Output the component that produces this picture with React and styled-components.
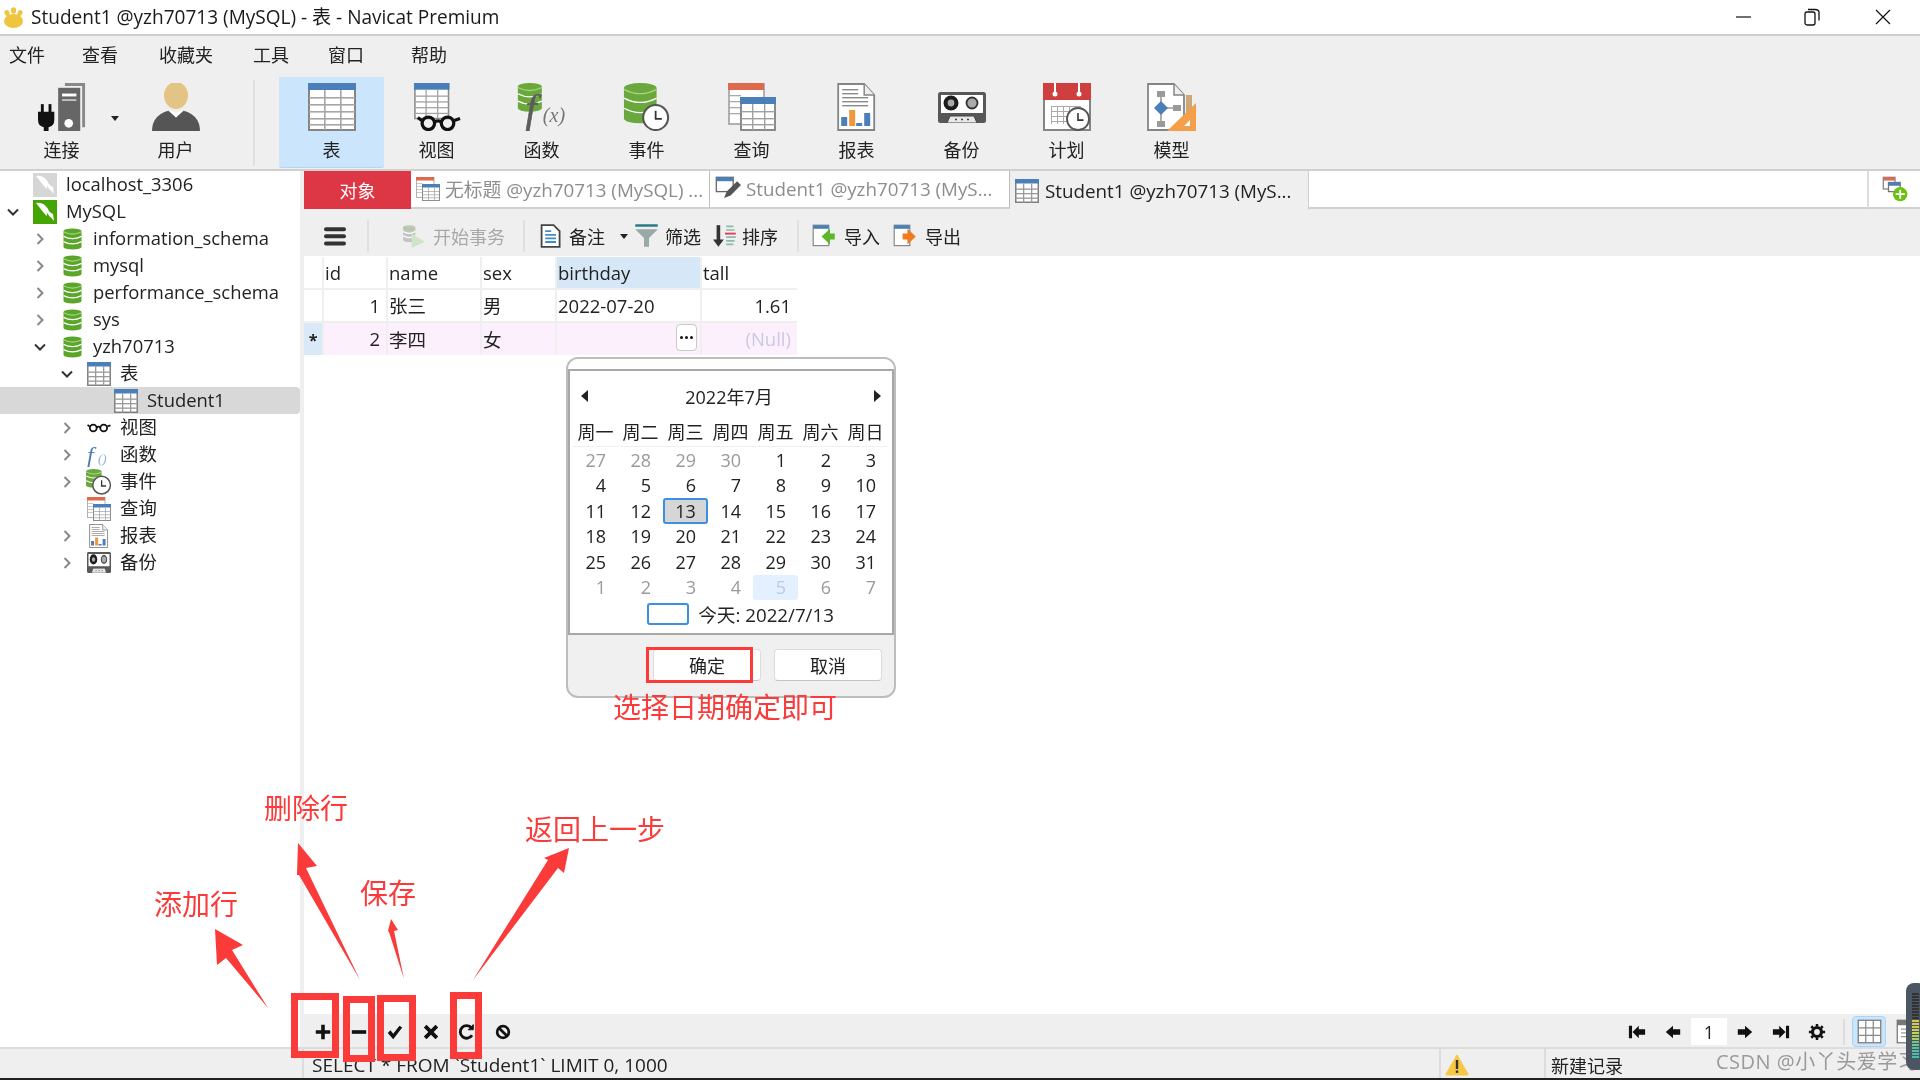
import React from 'react';
import styled, { createGlobalStyle } from 'styled-components';

const FONT = '"Open Sans", "Noto Sans CJK SC", sans-serif';

const Global = createGlobalStyle`
  html, body { margin: 0; padding: 0; background: #fff; overflow: hidden; }
  * { box-sizing: border-box; }
`;

const Page = styled.div`
  position: relative;
  width: 1920px;
  height: 1080px;
  display: flex;
  flex-direction: column;
  font-family: ${FONT};
  font-size: 18px;
  color: #222;
  background: #fff;
  overflow: hidden;
  filter: blur(0.35px);
`;

/* ---------- window chrome ---------- */
const TitleBar = styled.div`
  height: 36px;
  flex: none;
  display: flex;
  align-items: center;
  padding-left: 3px;
  border-bottom: 2px solid #cfcfcf;
  background: #fff;
`;
const TitleText = styled.div`
  margin-left: 7px;
  flex: 1;
  font-size: 19.05px;
  line-height: 30px;
  color: #1a1a1a;
  white-space: nowrap;
`;
const WinBtn = styled.div`
  width: ${p => p.$w}px;
  height: 34px;
  display: flex;
  align-items: center;
  justify-content: center;
`;
const MenuBar = styled.div`
  height: 36px;
  flex: none;
  background: #efefef;
  display: flex;
  align-items: center;
  padding: 2px 0 0 9px;
`;
const MenuItem = styled.div`
  margin-right: ${p => p.$gap}px;
  white-space: nowrap;
  line-height: 1;
`;
const ToolBar = styled.div`
  height: 99px;
  flex: none;
  background: #efefef;
  border-bottom: 2px solid #d0d0d0;
  display: flex;
  align-items: flex-start;
  padding: 5px 0 0 9px;
`;
const ToolBtn = styled.div`
  position: relative;
  width: 105px;
  height: 91px;
  flex: none;
  margin-left: ${p => p.$ml || 0}px;
  display: flex;
  flex-direction: column;
  align-items: center;
  padding-top: 6px;
  background: ${p => (p.$active ? '#cbe5fc' : 'transparent')};
  border-radius: 0 0 3px 3px;
  border-bottom: 1px solid ${p => (p.$active ? '#b4d6f4' : 'transparent')};
`;
const ToolIcon = styled.div`
  height: 48px;
  display: flex;
  align-items: center;
`;
const ToolLabel = styled.div`
  margin-top: 7px;
  line-height: 24px;
  color: #222;
`;
const ToolCaret = styled.div`
  position: absolute;
  right: -5px;
  top: 39px;
  width: 0;
  height: 0;
  border: 4px solid transparent;
  border-top: 5px solid #222;
`;
const ToolSep = styled.div`
  width: 2px;
  height: 86px;
  flex: none;
  margin: 3px 0 0 25px;
  background: #e0e0e0;
`;

/* ---------- main area ---------- */
const Main = styled.div`
  height: 876px;
  flex: none;
  display: flex;
`;
const Sidebar = styled.div`
  width: 304px;
  flex: none;
  border-right: 4px solid #efefef;
  background: #fff;
`;
const TreeRow = styled.div`
  height: 27px;
  display: flex;
  align-items: center;
  padding-left: ${p => p.$level * 27}px;
  background: ${p => (p.$selected ? '#d8d8d8' : 'transparent')};
  border-radius: 0 4px 4px 0;
`;
const TreeArrow = styled.div`
  width: 27px;
  flex: none;
  display: flex;
  justify-content: center;
  padding-right: 1px;
`;
const TreeIcon = styled.div`
  width: 36px;
  height: 27px;
  flex: none;
  display: flex;
  align-items: center;
  justify-content: center;
`;
const TreeLabel = styled.div`
  margin-left: 3px;
  padding-bottom: 2px;
  font-size: 18.4px;
  line-height: 25px;
  white-space: nowrap;
  color: #222;
`;
const Content = styled.div`
  flex: 1;
  min-width: 0;
  display: flex;
  flex-direction: column;
`;
const TabStrip = styled.div`
  height: 39px;
  flex: none;
  display: flex;
  background: #efefef;
`;
const ObjectTab = styled.div`
  width: 107px;
  height: 38px;
  flex: none;
  background: #dd3745;
  color: #fff;
  display: flex;
  align-items: center;
  justify-content: center;
`;
const Tab = styled.div`
  width: ${p => p.$w}px;
  height: ${p => (p.$active ? 39 : 38)}px;
  flex: none;
  display: flex;
  align-items: center;
  padding-left: 5px;
  gap: ${p => (p.$active ? 6 : 5)}px;
  font-size: 18.8px;
  background: ${p => (p.$active ? '#efefef' : '#fff')};
  border-right: 1px solid ${p => (p.$active ? '#cfcfcf' : '#bdbdbd')};
  border-bottom: ${p => (p.$active ? 0 : 2)}px solid #d0d0d0;
  color: ${p => (p.$active ? '#222' : '#8d8d8d')};
  white-space: nowrap;
  overflow: hidden;
`;
const TabFill = styled.div`
  flex: 1;
  height: 38px;
  background: #fff;
  border-bottom: 2px solid #d0d0d0;
`;
const TabAdd = styled.div`
  width: 53px;
  height: 38px;
  flex: none;
  background: #fff;
  border-left: 2px solid #dcdcdc;
  border-bottom: 2px solid #d0d0d0;
  display: flex;
  align-items: center;
  justify-content: center;
`;
const SubBar = styled.div`
  height: 46px;
  flex: none;
  background: #efefef;
  display: flex;
  align-items: center;
  padding: 5px 0 0 20px;
`;
const SubSep = styled.div`
  width: 2px;
  height: 32px;
  flex: none;
  margin-left: ${p => p.$ml}px;
  background: #e0e0e0;
`;
const SubTool = styled.div`
  display: flex;
  align-items: center;
  flex: none;
  gap: ${p => p.$gap}px;
  margin-left: ${p => p.$ml}px;
  color: ${p => (p.$disabled ? '#a8a8a8' : '#222')};
  white-space: nowrap;
`;
const SubCaret = styled.div`
  width: 0;
  height: 0;
  margin: 5px 0 0 8px;
  border: 4px solid transparent;
  border-top: 5px solid #222;
`;
const GridArea = styled.div`
  flex: 1;
  background: #fff;
  padding-top: 1px;
`;
const DataGrid = styled.div`
  width: 493px;
  display: grid;
  grid-template-columns: 18px 62px 92px 73px 143px 95px;
  grid-template-rows: 31px 31px 32px;
  gap: 2px 2px;
  background: #efefef;
`;
const Cell = styled.div`
  position: relative;
  display: flex;
  align-items: center;
  justify-content: ${p => (p.$right ? 'flex-end' : 'flex-start')};
  padding: 0 ${p => (p.$right ? 6 : 2)}px 1px 1px;
  font-size: 18.5px;
  background: ${p => p.$bg || '#fff'};
  color: ${p => p.$color || '#222'};
  white-space: nowrap;
`;
const EllipsisBtn = styled.div`
  position: absolute;
  right: 3px;
  top: 1px;
  width: 21px;
  height: 27px;
  background: #fff;
  border: 1px solid #c8c8c8;
  border-radius: 4px;
  display: flex;
  align-items: center;
  justify-content: center;
  gap: 2px;
`;
const Dot = styled.span`
  width: 3px;
  height: 3px;
  background: #111;
  border-radius: 50%;
`;
const Marker = styled.div`
  width: 100%;
  text-align: center;
  font-size: 16px;
  font-weight: 700;
  margin: 2px 0 0 1px;
`;
const RecBar = styled.div`
  height: 33px;
  flex: none;
  background: #efefef;
  display: flex;
  align-items: center;
  padding: 2px 0 0 1px;
`;
const RecBtn = styled.div`
  width: 36px;
  height: 31px;
  flex: none;
  display: flex;
  align-items: center;
  justify-content: center;
`;
const RecFill = styled.div`flex: 1;`;
const PageInput = styled.div`
  width: 36px;
  height: 27px;
  flex: none;
  background: #fff;
  display: flex;
  align-items: center;
  justify-content: center;
`;
const RecSep = styled.div`
  width: 2px;
  height: 26px;
  margin: 0 7px 0 8px;
  background: #dcdcdc;
`;
const ViewBtn = styled.div`
  width: 34px;
  height: 31px;
  flex: none;
  margin-right: ${p => p.$mr}px;
  display: flex;
  align-items: center;
  justify-content: center;
  background: ${p => (p.$active ? '#cbe5fc' : 'transparent')};
  border-radius: 4px;
  border: 1px solid ${p => (p.$active ? '#a8d4f8' : 'transparent')};
`;
const StatusBar = styled.div`
  height: 31px;
  flex: none;
  background: #efefef;
  border-top: 2px solid #dcdcdc;
  display: flex;
  align-items: center;
`;
const StatusCell = styled.div`
  width: ${p => p.$w}px;
  height: 100%;
  flex: ${p => (p.$w ? 'none' : 1)};
  display: flex;
  align-items: center;
  padding: 2px 0 0 ${p => p.$pl}px;
  font-size: ${p => p.$fs || 18}px;
  border-right: 2px solid ${p => (p.$line ? '#dcdcdc' : 'transparent')};
  white-space: nowrap;
  color: #222;
`;
const BottomEdge = styled.div`
  height: 2px;
  flex: none;
  background: #222;
`;

/* ---------- date picker popup ---------- */
const Popup = styled.div`
  position: absolute;
  left: 566px;
  top: 357px;
  width: 330px;
  height: 341px;
  background: #f0f0f0;
  border: 2px solid #bdbdbd;
  border-radius: 12px;
  overflow: hidden;
  display: flex;
  flex-direction: column;
`;
const PopupCap = styled.div`
  height: 10px;
  flex: none;
  background: #fff;
`;
const Calendar = styled.div`
  height: 266px;
  flex: none;
  background: #fff;
  border: 2px solid #a8a8a8;
  padding: 11px 0 0 3px;
  display: flex;
  flex-direction: column;
`;
const MonthRow = styled.div`
  height: 27px;
  display: flex;
  align-items: center;
  justify-content: space-between;
  padding: 0 11px 0 8px;
`;
const MonthTitle = styled.div`
  font-size: 18px;
  margin-right: 4px;
`;
const CalArrow = styled.div`
  width: 0;
  height: 0;
  border: 6px solid transparent;
  ${p => (p.$left ? 'border-right: 7px solid #222; border-left: 0;' : 'border-left: 7px solid #222; border-right: 0;')}
`;
const WeekRow = styled.div`
  margin-top: 11px;
  display: grid;
  grid-template-columns: repeat(7, 45px);
  height: 27px;
  border-bottom: 1px solid #f0f0f0;
  width: 315px;
`;
const WeekDay = styled.div`
  text-align: center;
  line-height: 24px;
  font-size: 18px;
  white-space: nowrap;
`;
const DayGrid = styled.div`
  display: grid;
  grid-template-columns: repeat(7, 45px);
  grid-auto-rows: 25.5px;
`;
const Day = styled.div`
  display: flex;
  align-items: center;
  justify-content: ${p => (p.$sel ? 'center' : 'flex-end')};
  padding-right: ${p => (p.$sel ? 0 : 12)}px;
  color: ${p => (p.$soon ? '#b9c8ee' : p.$muted ? '#9a9a9a' : '#222')};
  background: ${p => (p.$sel ? '#d6d6d6' : p.$soon ? '#e3f0ff' : 'transparent')};
  border: ${p => (p.$sel ? '2px solid #3d8fe0' : 'none')};
  border-radius: 3px;
`;
const TodayRow = styled.div`
  margin-top: 1px;
  display: flex;
  align-items: center;
  justify-content: center;
  gap: 9px;
  height: 24px;
  margin-left: 16px;
  font-size: 18.7px;
`;
const TodayBox = styled.div`
  width: 42px;
  height: 22px;
  margin-top: 2px;
  border: 2px solid #3d8fe0;
  border-radius: 3px;
`;
const PopupFoot = styled.div`
  flex: 1;
  display: flex;
  padding: 14px 0 0 85px;
  gap: 13px;
`;
const FootBtn = styled.div`
  width: 108px;
  height: 32px;
  background: #fff;
  border: 1px solid #dcdcdc;
  border-bottom-color: #c4c4c4;
  border-radius: 4px;
  display: flex;
  align-items: center;
  justify-content: center;
`;

/* ---------- annotations over the picture ---------- */
const Note = styled.div`
  position: absolute;
  left: ${p => p.$x}px;
  top: ${p => p.$y}px;
  font-size: 28px;
  line-height: 36px;
  color: #fb3a3a;
  white-space: nowrap;
`;
const RedBox = styled.div`
  position: absolute;
  left: ${p => p.$x}px;
  top: ${p => p.$y}px;
  width: ${p => p.$w}px;
  height: ${p => p.$h}px;
  border: ${p => p.$b}px solid #fb3a3a;
`;
const ArrowLayer = styled.svg`
  position: absolute;
  left: 0;
  top: 0;
  width: 1920px;
  height: 1080px;
  pointer-events: none;
`;
const Watermark = styled.div`
  position: absolute;
  left: 1716px;
  top: 1049px;
  font-size: 20px;
  line-height: 26px;
  color: #9a9a9a;
  white-space: nowrap;
  letter-spacing: 0.5px;
`;
const Meter = styled.div`
  position: absolute;
  left: 1906px;
  top: 983px;
  width: 20px;
  height: 87px;
  background: #4c5663;
  border-radius: 8px;
  display: flex;
  flex-direction: column;
  gap: 1px;
  padding: 10px 0 0 6px;
`;
const MeterBar = styled.div`
  width: 7px;
  height: 2px;
  background: ${p => p.$c};
`;

/* ---------- drawings ---------- */
const Svg = ({ size = 48, w, h, vb = '0 0 48 48', fit, children }) => (
  <svg width={w || size} height={h || size} viewBox={vb} preserveAspectRatio={fit} style={{ display: 'block', flex: 'none' }}>{children}</svg>
);

const TableIcon = ({ size = 48, head = '#4a7fb9' }) => (
  <Svg size={size}>
    <rect x="1" y="1" width="46" height="46" fill="#fff" stroke="#858585" strokeWidth="2" />
    <rect x="0" y="0" width="48" height="7" fill={head} />
    {[14, 21, 28, 35, 41].map(y => <rect key={y} x="1" y={y} width="46" height="1.6" fill="#a6a6a6" />)}
    {[16, 32].map(x => <rect key={x} x={x} y="7" width="1.6" height="40" fill="#a6a6a6" />)}
  </Svg>
);
const SmallTable = ({ size = 24 }) => (
  <Svg size={size}>
    <rect x="1.5" y="1.5" width="45" height="45" fill="#fff" stroke="#808080" strokeWidth="3" />
    <rect x="0" y="0" width="48" height="9" fill="#4a7fb9" />
    {[19, 28, 37].map(y => <rect key={y} x="1" y={y} width="46" height="2.6" fill="#9a9a9a" />)}
    {[16, 32].map(x => <rect key={x} x={x} y="9" width="2.6" height="38" fill="#9a9a9a" />)}
  </Svg>
);
const Glasses = ({ x = 0, y = 0, s = 1 }) => (
  <g transform={`translate(${x} ${y}) scale(${s})`} fill="none" stroke="#111" strokeWidth="3.4">
    <circle cx="11" cy="9" r="6.5" />
    <circle cx="31" cy="9" r="6.5" />
    <path d="M17 8q4-3 8 0M4 6 0 3M38 6l6-2" />
  </g>
);
const ViewIcon = () => (
  <Svg w={50} h={48} vb="0 0 50 50">
    <rect x="2" y="1" width="35" height="36" fill="#fff" stroke="#8a8a8a" strokeWidth="1.6" />
    <rect x="1" y="0" width="37" height="7" fill="#4a7fb9" />
    {[13, 19, 25, 31].map(y => <rect key={y} x="2" y={y} width="35" height="1.4" fill="#a6a6a6" />)}
    {[13, 25].map(x => <rect key={x} x={x} y="7" width="1.4" height="30" fill="#a6a6a6" />)}
    <Glasses x={5} y={33} />
  </Svg>
);
const GlassesSmall = () => (
  <Svg w={24} h={14} vb="0 0 46 20"><Glasses x={1} y={1} /></Svg>
);
/* A stack of three discs: one solid cylinder crossed by two pale rims. */
const Db = ({ x, y, w, h, color = '#6aa83e', gap = 1.4 }) => {
  const rx = w / 2;
  const ry = h * 0.12;
  const body = h - ry * 2;
  return (
    <g>
      <path
        d={`M${x} ${y + ry}a${rx} ${ry} 0 0 1 ${w} 0v${body}a${rx} ${ry} 0 0 1 -${w} 0z`}
        fill={color}
      />
      {[0, 1, 2].map(i => (
        <path
          key={i}
          d={`M${x} ${y + ry + (i * body) / 3 + (i === 0 ? ry * 0.3 : 0)}q${rx} ${ry * 1.8} ${w} 0`}
          fill="none"
          stroke={i === 0 ? '#a5d47e' : '#fff'}
          strokeWidth={gap}
        />
      ))}
    </g>
  );
};
const DbIcon = () => (
  <Svg w={19} h={22} vb="0 0 19 22"><Db x={0.5} y={0.5} w={18} h={21} color="#5aa52a" gap={1.3} /></Svg>
);
const Clock = ({ cx, cy, r }) => (
  <g>
    <circle cx={cx} cy={cy} r={r} fill="#fff" stroke="#555" strokeWidth={r / 6} />
    <path d={`M${cx} ${cy - r * 0.55}V${cy + r * 0.1}H${cx + r * 0.5}`} fill="none" stroke="#333" strokeWidth={r / 7} />
  </g>
);
const FuncIcon = () => (
  <Svg w={56} h={48} vb="-3 0 58.300 50">
    <Db x={1} y={0} w={25} h={30} />
    <text x="9" y="41" fontFamily="'Liberation Serif', serif" fontStyle="italic" fontSize="42" fill="#5c5c5c" stroke="#5c5c5c" strokeWidth="0.6">f</text>
    <text x="27" y="41" fontFamily="'Liberation Serif', serif" fontStyle="italic" fontSize="21" fill="#777">(x)</text>
  </Svg>
);
const EventIcon = () => (
  <Svg size={48} vb="0 0 50 50">
    <Db x={1} y={0} w={34} h={42} />
    <Clock cx={34} cy={36} r={13} />
  </Svg>
);
const EventSmall = () => (
  <Svg size={26} vb="0 0 50 50">
    <Db x={0} y={0} w={30} h={36} gap={2} />
    <Clock cx={30} cy={31} r={17} />
  </Svg>
);
const QueryIcon = ({ size = 48 }) => (
  <Svg size={size}>
    <rect x="1" y="1" width="35" height="40" fill="#fff" stroke="#999" strokeWidth="1.5" />
    <rect x="0" y="0" width="36" height="7" fill="#dd6a4d" />
    {[12, 18, 24, 30].map(y => <rect key={y} x="1" y={y} width="12" height="1.3" fill="#aaa" />)}
    <rect x="13" y="15" width="34" height="32" fill="#fff" stroke="#7f7f7f" strokeWidth="1.8" />
    <rect x="12" y="14" width="36" height="7" fill="#4a7fb9" />
    {[28, 35, 41].map(y => <rect key={y} x="13" y={y} width="34" height="1.4" fill="#a0a0a0" />)}
    {[24, 36].map(x => <rect key={x} x={x} y="21" width="1.4" height="26" fill="#a0a0a0" />)}
  </Svg>
);
const ReportIcon = ({ size = 48 }) => (
  <Svg w={size * 0.8} h={size} vb="0 0 38 48">
    <path d="M1 1h26l10 11v35H1z" fill="#fff" stroke="#858585" strokeWidth="1.8" />
    <path d="M27 1v11h10" fill="#eee" stroke="#858585" strokeWidth="1.5" />
    {[6, 10, 14, 18, 22].map((y, i) => <rect key={y} x="5" y={y} width={i < 2 ? 16 : 26} height="1.4" fill="#8a8a8a" />)}
    <rect x="4" y="34" width="6" height="9" fill="#4a7fb9" />
    <rect x="12" y="27" width="6" height="16" fill="#f0963c" />
    <rect x="19" y="40" width="6" height="3" fill="#4a7fb9" />
    <rect x="27" y="30" width="6" height="13" fill="#4a7fb9" />
  </Svg>
);
const BackupIcon = ({ w = 48, h = 31 }) => (
  <Svg w={w} h={h} vb="0 0 48 31" fit="none">
    <rect x="0" y="0" width="48" height="31" rx="2.500" fill="#585858" />
    <rect x="3" y="3" width="42" height="18" fill="#fff" />
    <circle cx="13" cy="11" r="7.500" fill="#1c1c1c" />
    <circle cx="13" cy="11" r="3.400" fill="#aaa" />
    <circle cx="34" cy="11" r="5.500" fill="#aaa" stroke="#333" strokeWidth="1.800" />
    <path d="M9 31l3-7h24l3 7z" fill="#e8e8e8" stroke="#444" strokeWidth="1" />
    <path d="M17 27.500h2M23 27.500h2M29 27.500h2" stroke="#444" strokeWidth="1.400" />
  </Svg>
);
const PlanIcon = () => (
  <Svg size={48}>
    <rect x="1" y="1" width="46" height="46" fill="#fff" stroke="#858585" strokeWidth="2" />
    <rect x="0" y="0" width="48" height="17" fill="#cf3f3f" />
    <rect x="11" y="0" width="2" height="11" fill="#fff" />
    <rect x="35" y="0" width="2" height="11" fill="#fff" />
    <circle cx="12" cy="11" r="2.5" fill="#fff" />
    <circle cx="36" cy="11" r="2.5" fill="#fff" />
    {[23, 28, 33, 38].map(y => <rect key={y} x="8" y={y} width="30" height="1" fill="#aaa" />)}
    {[8, 14, 20, 26, 32].map(x => <rect key={x} x={x} y="23" width="1" height="18" fill="#aaa" />)}
    <Clock cx={35} cy={36} r={11} />
  </Svg>
);
const ModelIcon = () => (
  <Svg w={50} h={48} vb="0 0 50 48">
    <path d="M1 1h26l10 11v35H1z" fill="#fff" stroke="#858585" strokeWidth="1.8" />
    <path d="M27 1v11h10" fill="#eee" stroke="#858585" strokeWidth="1.5" />
    <rect x="10" y="8" width="8" height="6" fill="#9a9a9a" />
    <rect x="10" y="38" width="8" height="6" fill="#9a9a9a" />
    <rect x="26" y="22" width="8" height="6" fill="#9a9a9a" />
    <path d="M14 14v24M18 25h8" stroke="#9a9a9a" strokeWidth="1.6" />
    <path d="M14 18l7 7-7 7-7-7z" fill="#4a7fb9" />
    <rect x="39" y="12" width="6" height="20" fill="#cda777" />
    <path d="M49 20v28H20z" fill="#f49f4a" />
    <path d="M43 37v6h-6z" fill="#fff" />
  </Svg>
);
const ConnIcon = () => (
  <Svg w={50} h={48} vb="0 0 50 50">
    <path d="M28 0h21v46h-3V3H28z" fill="#888" />
    <rect x="21" y="5" width="23" height="45" fill="#666" />
    <rect x="25" y="11" width="15" height="3" fill="#fff" />
    <rect x="25" y="17" width="15" height="1.5" fill="#ddd" />
    <circle cx="32" cy="42" r="4.5" fill="#fff" />
    <rect x="3" y="22" width="3" height="9" fill="#111" />
    <rect x="11" y="22" width="3" height="9" fill="#111" />
    <path d="M0 30h17v8q0 7-6 8v6H6v-6q-6-1-6-8z" fill="#111" />
  </Svg>
);
const UserIcon = () => (
  <Svg w={50} h={48} vb="0 0 50 50">
    <ellipse cx="25" cy="13" rx="12.5" ry="14" fill="#e4c484" />
    <path d="M0 50q0-16 17-21l8 7 8-7q17 5 17 21z" fill="#555" />
    <path d="M18 28l7 3 7-3-7 8z" fill="#fff" />
  </Svg>
);
const Dolphin = ({ bg }) => (
  <Svg w={24} h={24} vb="0 0 24 24">
    <rect width="24" height="24" fill={bg} />
    <path d="M3 3c5-1 9 1 12 6 1 3 3 4 5 5l1 7-2.500-3c-2-1-3-3-4-5l-1 3C10 12 7 8 3 3z" fill="#fff" />
  </Svg>
);
const FuncSmall = () => (
  <Svg w={24} h={24} vb="0 0 24 24">
    <text x="0" y="20" fontFamily="'Liberation Serif', serif" fontStyle="italic" fontSize="24" fill="#4a7fb9">f</text>
    <text x="11" y="20" fontFamily="'Liberation Serif', serif" fontStyle="italic" fontSize="13" fill="#8ab0d8">()</text>
  </Svg>
);
const Logo = () => (
  <Svg w={21} h={21} vb="0 0 21 21">
    <ellipse cx="10.500" cy="14" rx="9.500" ry="7" fill="#eec53e" />
    <ellipse cx="4" cy="6" rx="2.500" ry="3" fill="#eec53e" transform="rotate(-20 4 6)" />
    <ellipse cx="10.500" cy="3.500" rx="2.600" ry="3.200" fill="#eec53e" />
    <ellipse cx="17" cy="6" rx="2.500" ry="3" fill="#eec53e" transform="rotate(20 17 6)" />
  </Svg>
);
const Chevron = ({ down }) => (
  <svg width="14" height="14" viewBox="0 0 14 14" style={{ display: 'block' }}>
    <path d={down ? 'M2 4.500 7 9.500 12 4.500' : 'M4.500 2 9.500 7 4.500 12'} fill="none" stroke={down ? '#333' : '#888'} strokeWidth="2" />
  </svg>
);
const Small = ({ children, s = 20 }) => (
  <svg width={s} height={s} viewBox="0 0 20 20" style={{ display: 'block', flex: 'none' }}>{children}</svg>
);

const treeIcons = {
  gray: <Dolphin bg="#d6d6d6" />,
  green: <Dolphin bg="#44a400" />,
  db: <DbIcon />,
  table: <SmallTable />,
  view: <GlassesSmall />,
  func: <FuncSmall />,
  event: <EventSmall />,
  query: <QueryIcon size={24} />,
  report: <ReportIcon size={24} />,
  backup: <BackupIcon w={24} h={21} />,
};

const tree = [
  { label: 'localhost_3306', level: 0, icon: 'gray' },
  { label: 'MySQL', level: 0, icon: 'green', arrow: 'down' },
  { label: 'information_schema', level: 1, icon: 'db', arrow: 'right' },
  { label: 'mysql', level: 1, icon: 'db', arrow: 'right' },
  { label: 'performance_schema', level: 1, icon: 'db', arrow: 'right' },
  { label: 'sys', level: 1, icon: 'db', arrow: 'right' },
  { label: 'yzh70713', level: 1, icon: 'db', arrow: 'down' },
  { label: '表', level: 2, icon: 'table', arrow: 'down' },
  { label: 'Student1', level: 3, icon: 'table', selected: true },
  { label: '视图', level: 2, icon: 'view', arrow: 'right' },
  { label: '函数', level: 2, icon: 'func', arrow: 'right' },
  { label: '事件', level: 2, icon: 'event', arrow: 'right' },
  { label: '查询', level: 2, icon: 'query' },
  { label: '报表', level: 2, icon: 'report', arrow: 'right' },
  { label: '备份', level: 2, icon: 'backup', arrow: 'right' },
];

const menus = [['文件', 37], ['查看', 41], ['收藏夹', 40], ['工具', 39], ['窗口', 47], ['帮助', 0]];

const tools = [
  ['表', <TableIcon />, true],
  ['视图', <ViewIcon />],
  ['函数', <FuncIcon />],
  ['事件', <EventIcon />],
  ['查询', <QueryIcon />],
  ['报表', <ReportIcon />],
  ['备份', <BackupIcon />],
  ['计划', <PlanIcon />],
  ['模型', <ModelIcon />],
];

const weeks = ['周一', '周二', '周三', '周四', '周五', '周六', '周日'];
const days = [
  ...[27, 28, 29, 30].map(n => ({ n, muted: true })),
  ...Array.from({ length: 31 }, (_, i) => ({ n: i + 1 })),
  ...[1, 2, 3, 4, 5, 6, 7].map(n => ({ n, muted: true })),
];

const recIcons = [
  <path d="M8 2h4v6h6v4h-6v6H8v-6H2V8h6z" fill="#111" />,
  <rect x="2" y="8" width="16" height="4" fill="#111" />,
  <path d="M2 11l3-3 3 4 7-9 3 2-10 13z" fill="#111" />,
  <path d="M5 2l5 5 5-5 3 3-5 5 5 5-3 3-5-5-5 5-3-3 5-5-5-5z" fill="#111" />,
  <g fill="none" stroke="#111" strokeWidth="3.200"><path d="M15.500 13.500A7 7 0 1 1 15 5.500" /><path d="M17 1.500v6h-6" fill="#111" strokeWidth="1" /></g>,
  <g fill="none" stroke="#111" strokeWidth="3"><circle cx="10" cy="10" r="6.500" /><path d="M5.500 5.500l9 9" /></g>,
];
const NavFirst = <path d="M1 3h3.500v14H1zM5 10l7-7v4h7v6h-7v4z" fill="#111" />;
const NavPrev = <path d="M2 10l8-7v4h8v6h-8v4z" fill="#111" />;
const NavNext = <path d="M18 10l-8-7v4H2v6h8v4z" fill="#111" />;
const NavLast = <path d="M19 3h-3.500v14H19zM15 10L8 3v4H1v6h7v4z" fill="#111" />;
const Gear = (
  <g fill="none" stroke="#111">
    <circle cx="10" cy="10" r="5" strokeWidth="3.500" />
    <path d="M10 1v3M10 16v3M1 10h3M16 10h3M3.600 3.600l2 2M14.400 14.400l2 2M3.600 16.400l2-2M14.400 5.600l2-2" strokeWidth="2.800" />
  </g>
);

const arrows = [
  'M215 929 L243 945 L232 950 L268 1008 L226 958 L217 965 Z',
  'M298 843 L317 866 L306 868 L360 980 L299 875 L297 875 Z',
  'M391 919 L398 930 L394 931 L404 979 L389 932 L388 931 Z',
  'M569 848 L564 873 L558 868 L473 980 L548 860 L544 858 Z',
];

const meterColors = ['#333', '#333', '#333', '#333', '#333', '#333', '#333', '#333', '#333', '#d8c84a', '#d8c84a', '#d8c84a', '#c8d050', '#c8d050', '#a8d060', '#a8d060', '#70c880', '#70c880', '#50c0a0', '#50c0a0', '#40c0b0', '#40c0b0'];

export default function App() {
  return (
    <Page>
      <Global />
      <TitleBar>
        <Logo />
        <TitleText>Student1 @yzh70713 (MySQL) - 表 - Navicat Premium</TitleText>
        <WinBtn $w={68}>
          <svg width="16" height="16" viewBox="0 0 16 16"><path d="M0 8h15" stroke="#111" strokeWidth="1.200" /></svg>
        </WinBtn>
        <WinBtn $w={68}>
          <svg width="16" height="18" viewBox="0 0 16 18" fill="none" stroke="#111" strokeWidth="1.300"><rect x="1" y="4" width="10" height="13" rx="2" /><path d="M4 1.500h7q4 0 4 3v8" /></svg>
        </WinBtn>
        <WinBtn $w={74}>
          <svg width="16" height="16" viewBox="0 0 16 16"><path d="M1 1l14 14M15 1L1 15" stroke="#111" strokeWidth="1.200" /></svg>
        </WinBtn>
      </TitleBar>
      <MenuBar>
        {menus.map(([m, g]) => <MenuItem key={m} $gap={g}>{m}</MenuItem>)}
      </MenuBar>
      <ToolBar>
        <ToolBtn>
          <ToolIcon><ConnIcon /></ToolIcon>
          <ToolLabel>连接</ToolLabel>
          <ToolCaret />
        </ToolBtn>
        <ToolBtn $ml={9}>
          <ToolIcon><UserIcon /></ToolIcon>
          <ToolLabel>用户</ToolLabel>
        </ToolBtn>
        <ToolSep />
        {tools.map(([label, icon, active], i) => (
          <ToolBtn key={label} $active={active} $ml={i === 0 ? 24 : 0}>
            <ToolIcon>{icon}</ToolIcon>
            <ToolLabel>{label}</ToolLabel>
          </ToolBtn>
        ))}
      </ToolBar>
      <Main>
        <Sidebar>
          {tree.map(row => (
            <TreeRow key={row.label} $level={row.level} $selected={row.selected}>
              <TreeArrow>{row.arrow && <Chevron down={row.arrow === 'down'} />}</TreeArrow>
              <TreeIcon>{treeIcons[row.icon]}</TreeIcon>
              <TreeLabel>{row.label}</TreeLabel>
            </TreeRow>
          ))}
        </Sidebar>
        <Content>
          <TabStrip>
            <ObjectTab>对象</ObjectTab>
            <Tab $w={299}><QueryIcon size={24} />无标题 @yzh70713 (MySQL) ...</Tab>
            <Tab $w={300}>
              <Small s={26}>
                <rect x="1" y="1" width="13" height="11" fill="#fff" stroke="#666" /><rect x="1" y="1" width="13" height="3" fill="#4a7fb9" />
                <path d="M7 17l2-5 8-8 3 3-8 8z" fill="#555" />
              </Small>
              Student1 @yzh70713 (MyS...
            </Tab>
            <Tab $w={299} $active><SmallTable />Student1 @yzh70713 (MyS...</Tab>
            <TabFill />
            <TabAdd>
              <Small s={26}>
                <rect x="1" y="1" width="9" height="9" fill="#fff" stroke="#888" /><rect x="1" y="1" width="9" height="2.500" fill="#dd6a4d" />
                <rect x="5" y="5" width="9" height="7" fill="#fff" stroke="#777" /><rect x="5" y="5" width="9" height="2.500" fill="#4a7fb9" />
                <circle cx="14" cy="14" r="5.500" fill="#6cc010" />
                <path d="M14 10.500v7M10.500 14h7" stroke="#fff" strokeWidth="1.400" />
              </Small>
            </TabAdd>
          </TabStrip>
          <SubBar>
            <Small s={22}>
              <rect x="0" y="2" width="20" height="3.600" rx="1.800" fill="#333" />
              <rect x="0" y="8.500" width="20" height="3.600" rx="1.800" fill="#333" />
              <rect x="0" y="15" width="20" height="3.600" rx="1.800" fill="#333" />
            </Small>
            <SubSep $ml={21} />
            <SubTool $ml={33} $gap={7} $disabled>
              <Small s={24}>
                <Db x={1} y={1} w={10} h={14} color="#c4c4c4" gap={1} />
                <path d="M8 8l11 7-11 5z" fill="#cfe4c8" />
              </Small>
              开始事务
            </SubTool>
            <SubSep $ml={18} />
            <SubTool $ml={13} $gap={7}>
              <Small s={24}>
                <path d="M3 1h10l5 5v13H3z" fill="#fff" stroke="#444" strokeWidth="1.500" />
                <path d="M6 6h5M6 9h9M6 12h9M6 15h9" stroke="#3f8cc8" strokeWidth="1.500" />
              </Small>
              备注
              <SubCaret />
            </SubTool>
            <SubTool $ml={6} $gap={6}>
              <Small s={25}>
                <rect x="1" y="1" width="18" height="2" fill="#2a7a8a" />
                <path d="M1 5h18l-7 7v7h-4v-7z" fill="#9aa8a8" />
              </Small>
              筛选
            </SubTool>
            <SubTool $ml={12} $gap={5}>
              <Small s={24}>
                <rect x="3" y="1" width="3" height="13" fill="#333" />
                <path d="M0 13h9l-4.500 6z" fill="#333" />
                <path d="M11 2h6M11 5h7M11 11h8M11 14h7M11 17h6" stroke="#8cbca8" strokeWidth="1.400" />
                <path d="M10 8h9" stroke="#e83a58" strokeWidth="1.600" />
              </Small>
              排序
            </SubTool>
            <SubSep $ml={19} />
            <SubTool $ml={13} $gap={8}>
              <Small s={24}>
                <rect x="1" y="1" width="13" height="17" fill="#fff" stroke="#888" /><rect x="1" y="1" width="13" height="3" fill="#4a7fb9" />
                <path d="M19 8v5h-4v4l-7-6.500 7-6.500v4z" fill="#5cb82a" />
              </Small>
              导入
            </SubTool>
            <SubTool $ml={13} $gap={8}>
              <Small s={24}>
                <rect x="1" y="1" width="13" height="17" fill="#fff" stroke="#888" /><rect x="1" y="1" width="13" height="3" fill="#4a7fb9" />
                <path d="M8 8v5h4v4l7-6.500-7-6.500v4z" fill="#f07a1e" />
              </Small>
              导出
            </SubTool>
          </SubBar>
          <GridArea>
            <DataGrid>
              <Cell />
              <Cell>id</Cell>
              <Cell>name</Cell>
              <Cell>sex</Cell>
              <Cell $bg="#d6e8f7">birthday</Cell>
              <Cell>tall</Cell>
              <Cell />
              <Cell $right>1</Cell>
              <Cell>张三</Cell>
              <Cell>男</Cell>
              <Cell>2022-07-20</Cell>
              <Cell $right>1.61</Cell>
              <Cell $bg="#d9e9f8"><Marker>*</Marker></Cell>
              <Cell $right $bg="#fdf0fd">2</Cell>
              <Cell $bg="#fdf0fd">李四</Cell>
              <Cell $bg="#fdf0fd">女</Cell>
              <Cell $bg="#fdf0fd"><EllipsisBtn><Dot /><Dot /><Dot /></EllipsisBtn></Cell>
              <Cell $right $bg="#fdf0fd" $color="#c9c9e2">(Null)</Cell>
            </DataGrid>
          </GridArea>
          <RecBar>
            {recIcons.map((ic, i) => <RecBtn key={i}><Small s={18}>{ic}</Small></RecBtn>)}
            <RecFill />
            <RecBtn><Small s={18}>{NavFirst}</Small></RecBtn>
            <RecBtn><Small s={18}>{NavPrev}</Small></RecBtn>
            <PageInput>1</PageInput>
            <RecBtn><Small s={18}>{NavNext}</Small></RecBtn>
            <RecBtn><Small s={18}>{NavLast}</Small></RecBtn>
            <RecBtn><Small s={18}>{Gear}</Small></RecBtn>
            <RecSep />
            <ViewBtn $active $mr={5}>
              <Small s={25}>
                <rect x="1" y="1" width="18" height="18" fill="#fff" stroke="#777" />
                <path d="M7 1v18M13 1v18M1 7h18M1 13h18" stroke="#888" strokeWidth="1" />
              </Small>
            </ViewBtn>
            <ViewBtn $mr={-5}>
              <Small s={25}>
                <rect x="1" y="1" width="18" height="18" fill="#fff" stroke="#777" />
                <rect x="1" y="1" width="18" height="4" fill="#777" />
                <path d="M4 8h8M4 11h8M4 14h8" stroke="#999" strokeWidth="1" />
              </Small>
            </ViewBtn>
          </RecBar>
        </Content>
      </Main>
      <StatusBar>
        <StatusCell $w={304} $pl={0} $line />
        <StatusCell $w={1137} $pl={8} $fs={19} $line>SELECT * FROM `Student1` LIMIT 0, 1000</StatusCell>
        <StatusCell $w={105} $pl={4} $line>
          <svg width="24" height="22" viewBox="0 0 24 22"><path d="M12 1 23 20q.4 1-1 1H2q-1.400 0-1-1z" fill="#f7c844" stroke="#f7c844" /><rect x="10.800" y="6" width="2.400" height="9" fill="#333" /><rect x="10.800" y="16.500" width="2.400" height="2.400" fill="#333" /></svg>
        </StatusCell>
        <StatusCell $pl={5}>新建记录</StatusCell>
      </StatusBar>
      <BottomEdge />

      <Popup>
        <PopupCap />
        <Calendar>
          <MonthRow>
            <CalArrow $left />
            <MonthTitle>2022年7月</MonthTitle>
            <CalArrow />
          </MonthRow>
          <WeekRow>{weeks.map(w => <WeekDay key={w}>{w}</WeekDay>)}</WeekRow>
          <DayGrid>
            {days.map((d, i) => (
              <Day key={i} $muted={d.muted} $sel={!d.muted && d.n === 13} $soon={d.muted && d.n === 5 && i > 30}>{d.n}</Day>
            ))}
          </DayGrid>
          <TodayRow><TodayBox />今天: 2022/7/13</TodayRow>
        </Calendar>
        <PopupFoot>
          <FootBtn>确定</FootBtn>
          <FootBtn>取消</FootBtn>
        </PopupFoot>
      </Popup>

      <Note $x={613} $y={689}>选择日期确定即可</Note>
      <Note $x={264} $y={790}>删除行</Note>
      <Note $x={154} $y={886}>添加行</Note>
      <Note $x={360} $y={875}>保存</Note>
      <Note $x={525} $y={811}>返回上一步</Note>
      <RedBox $x={646} $y={647} $w={107} $h={36} $b={3} />
      <RedBox $x={291} $y={993} $w={48} $h={65} $b={7} />
      <RedBox $x={343} $y={996} $w={32} $h={66} $b={7} />
      <RedBox $x={377} $y={995} $w={39} $h={66} $b={7} />
      <RedBox $x={450} $y={992} $w={32} $h={67} $b={7} />
      <ArrowLayer viewBox="0 0 1920 1080">
        {arrows.map(d => <path key={d} d={d} fill="#fb3a3a" />)}
      </ArrowLayer>
      <Watermark>CSDN @小丫头爱学习</Watermark>
      <Meter>
        {meterColors.map((c, i) => <MeterBar key={i} $c={c} />)}
      </Meter>
    </Page>
  );
}
